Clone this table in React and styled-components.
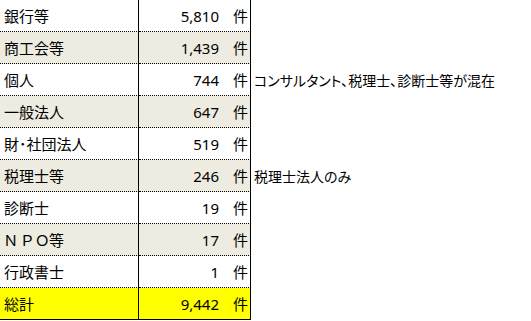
import React from 'react'
import styled, { createGlobalStyle } from 'styled-components'

const GlobalStyle = createGlobalStyle`
  html, body {
    margin: 0;
    padding: 0;
    background: #ffffff;
  }
  body {
    font-family: "Noto Sans CJK JP", "Noto Sans", sans-serif;
    color: #000000;
  }
`

const Sheet = styled.div`
  display: flex;
  flex-direction: column;
  width: 531px;
`

const Row = styled.div`
  display: grid;
  grid-template-columns: 139px 112px 1fr;
  height: 32px;
  align-items: stretch;
  font-size: 15px;
  font-feature-settings: "palt";
`

const Label = styled.div`
  display: flex;
  align-items: center;
  padding-left: 4px;
  background: ${p => p.bg};
  border-right: 1px solid #000;
  border-bottom: 1px ${p => (p.last ? 'solid' : 'dotted')} #000;
`

const Count = styled.div`
  display: grid;
  grid-template-columns: 1fr auto;
  align-items: center;
  column-gap: 14px;
  padding-right: 2px;
  background: ${p => p.bg};
  border-right: 1px solid #000;
  border-bottom: 1px ${p => (p.last ? 'solid' : 'dotted')} #000;
`

const Num = styled.span`
  text-align: right;
  font-family: "Noto Sans", "Open Sans", sans-serif;
  font-size: 15px;
`

const Note = styled.div`
  display: flex;
  align-items: center;
  padding-left: 3px;
  font-size: 14px;
  white-space: nowrap;
`

const rows = [
  { name: '銀行等', n: '5,810' },
  { name: '商工会等', n: '1,439', shade: true },
  { name: '個人', n: '744', note: 'コンサルタント、税理士、診断士等が混在' },
  { name: '一般法人', n: '647', shade: true },
  { name: '財･社団法人', n: '519' },
  { name: '税理士等', n: '246', shade: true, note: '税理士法人のみ' },
  { name: '診断士', n: '19' },
  { name: 'Ｎ Ｐ Ｏ等', n: '17', shade: true },
  { name: '行政書士', n: '1' },
  { name: '総計', n: '9,442', total: true },
]

export default function App() {
  return (
    <>
      <GlobalStyle />
      <Sheet>
        {rows.map(r => {
          const bg = r.total ? '#ffff00' : r.shade ? '#eeece1' : '#ffffff'
          return (
            <Row key={r.name}>
              <Label bg={bg} last={r.total}>{r.name}</Label>
              <Count bg={bg} last={r.total}>
                <Num>{r.n}</Num>
                <span>件</span>
              </Count>
              <Note>{r.note}</Note>
            </Row>
          )
        })}
      </Sheet>
    </>
  )
}
